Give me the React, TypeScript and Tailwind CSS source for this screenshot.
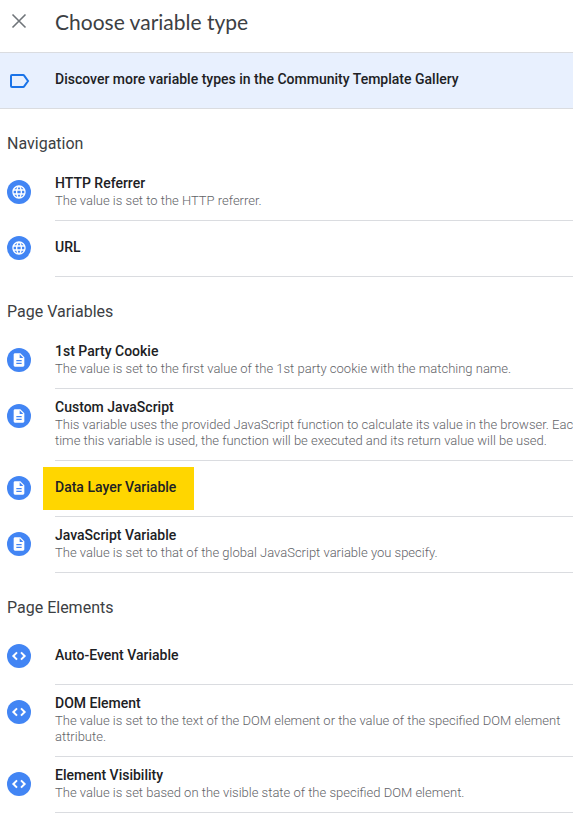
import type { ReactNode } from "react";
import { MdDescription, MdLanguage } from "react-icons/md";

type Kind = "globe" | "page" | "code";

interface Item {
  title: string;
  lines?: string[];
  highlighted?: boolean;
}

interface Section {
  heading: string;
  kind: Kind;
  items: Item[];
}

const sections: Section[] = [
  {
    heading: "Navigation",
    kind: "globe",
    items: [
      { title: "HTTP Referrer", lines: ["The value is set to the HTTP referrer."] },
      { title: "URL" },
    ],
  },
  {
    heading: "Page Variables",
    kind: "page",
    items: [
      {
        title: "1st Party Cookie",
        lines: ["The value is set to the first value of the 1st party cookie with the matching name."],
      },
      {
        title: "Custom JavaScript",
        lines: [
          "This variable uses the provided JavaScript function to calculate its value in the browser. Each",
          "time this variable is used, the function will be executed and its return value will be used.",
        ],
      },
      { title: "Data Layer Variable", highlighted: true },
      {
        title: "JavaScript Variable",
        lines: ["The value is set to that of the global JavaScript variable you specify."],
      },
    ],
  },
  {
    heading: "Page Elements",
    kind: "code",
    items: [
      { title: "Auto-Event Variable" },
      {
        title: "DOM Element",
        lines: [
          "The value is set to the text of the DOM element or the value of the specified DOM element",
          "attribute.",
        ],
      },
      {
        title: "Element Visibility",
        lines: ["The value is set based on the visible state of the specified DOM element."],
      },
    ],
  },
];

const icons: Record<Kind, ReactNode> = {
  globe: <MdLanguage className="size-4" />,
  page: <MdDescription className="size-4" />,
  code: (
    <svg viewBox="0 0 24 24" className="size-4" fill="none" stroke="currentColor" strokeWidth="3">
      <path d="M9 6.5L3.5 12L9 17.5M15 6.5L20.5 12L15 17.5" />
    </svg>
  ),
};

function Row({ item, kind }: { item: Item; kind: Kind }) {
  return (
    <li>
      <button type="button" className="flex w-full items-start gap-6 pl-[7px] text-left">
        <span className="mt-[15px] flex size-6 shrink-0 items-center justify-center rounded-full bg-[#4285f4] text-white">
          {icons[kind]}
        </span>
        <span className="flex min-h-14 min-w-0 flex-1 flex-col justify-center border-b border-[#dadce0] pt-2 pb-[11px]">
          <span
            className={
              item.highlighted
                ? "-mt-[10px] -mb-[13px] -ml-3 self-start bg-[#ffd600] pt-[10px] pr-[18px] pb-[13px] pl-3 text-sm font-medium text-[#202124]"
                : "text-sm font-medium text-[#202124]"
            }
          >
            {item.title}
          </span>
          {item.lines?.map((line) => (
            <span key={line} className="text-[13px] leading-4 font-light whitespace-nowrap text-[#5f6368]">
              {line}
            </span>
          ))}
        </span>
      </button>
    </li>
  );
}

export default function App() {
  return (
    <main className="min-h-screen overflow-hidden bg-white pb-2 font-['Roboto',sans-serif]">
      <header className="flex h-[52px] items-start gap-6 pt-2 pl-[7px]">
        <button type="button" aria-label="Close" className="mt-px">
          <svg viewBox="0 0 24 24" className="size-6" fill="none" stroke="#70757a" strokeWidth="1.6">
            <path d="M5.5 5.5l13 13M18.5 5.5l-13 13" />
          </svg>
        </button>
        <h1 className="font-['Lato',sans-serif] text-[21px] leading-7 text-[#3c4043]">
          Choose variable type
        </h1>
      </header>
      <a
        href="#gallery"
        className="flex h-[57px] items-center gap-6 border-y border-[#dadce0] bg-[#e8f0fe] pl-[7px]"
      >
        <svg viewBox="0 0 24 24" className="size-6 shrink-0" fill="none" stroke="#1a73e8" strokeWidth="2">
          <path d="M5 6h11.2a1 1 0 0 1 .8.4L21 12l-4 5.6a1 1 0 0 1-.8.4H5a1 1 0 0 1-1-1V7a1 1 0 0 1 1-1z" />
        </svg>
        <span className="pb-1 text-sm font-medium text-[#202124]">
          Discover more variable types in the Community Template Gallery
        </span>
      </a>
      {sections.map((section) => (
        <section key={section.heading}>
          <h2 className="pt-[23px] pb-[9px] pl-[7px] text-base leading-6 text-[#3c4043]">
            {section.heading}
          </h2>
          <ul>
            {section.items.map((item) => (
              <Row key={item.title} item={item} kind={section.kind} />
            ))}
          </ul>
        </section>
      ))}
    </main>
  );
}
